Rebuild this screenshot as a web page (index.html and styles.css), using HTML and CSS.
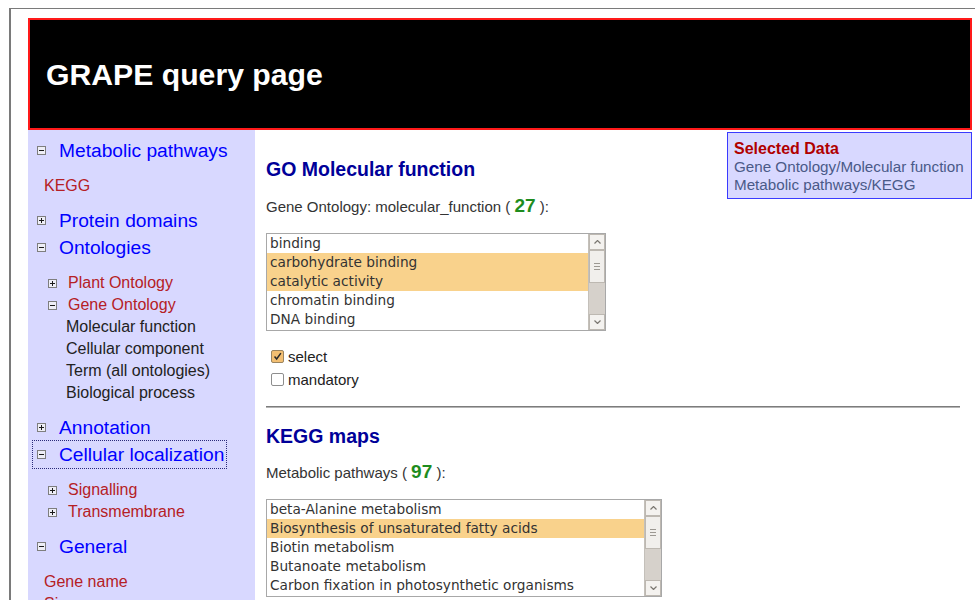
FILE: index.html
```html
<!DOCTYPE html>
<html lang="en">
<head>
<meta charset="utf-8">
<title>GRAPE query page</title>
<link rel="stylesheet" href="styles.css">
</head>
<body>
<div class="frame">
  <div class="page">
    <header class="banner"><h1>GRAPE query page</h1></header>
    <div class="layout">
      <nav class="side">
        <div class="group">
          <a class="head"><svg class="tog" viewBox="0 0 9 9"><rect x="0.5" y="0.5" width="8" height="8"/><path d="M2 4.5h5"/></svg>Metabolic pathways</a>
          <ul class="sub">
            <li class="leaf">KEGG</li>
          </ul>
        </div>
        <div class="group">
          <a class="head"><svg class="tog" viewBox="0 0 9 9"><rect x="0.5" y="0.5" width="8" height="8"/><path d="M2 4.5h5M4.5 2v5"/></svg>Protein domains</a>
        </div>
        <div class="group">
          <a class="head"><svg class="tog" viewBox="0 0 9 9"><rect x="0.5" y="0.5" width="8" height="8"/><path d="M2 4.5h5"/></svg>Ontologies</a>
          <ul class="sub">
            <li class="node"><svg class="tog" viewBox="0 0 9 9"><rect x="0.5" y="0.5" width="8" height="8"/><path d="M2 4.5h5M4.5 2v5"/></svg>Plant Ontology</li>
            <li class="node"><svg class="tog" viewBox="0 0 9 9"><rect x="0.5" y="0.5" width="8" height="8"/><path d="M2 4.5h5"/></svg>Gene Ontology</li>
            <li class="term">Molecular function</li>
            <li class="term">Cellular component</li>
            <li class="term">Term (all ontologies)</li>
            <li class="term">Biological process</li>
          </ul>
        </div>
        <div class="group">
          <a class="head"><svg class="tog" viewBox="0 0 9 9"><rect x="0.5" y="0.5" width="8" height="8"/><path d="M2 4.5h5M4.5 2v5"/></svg>Annotation</a>
        </div>
        <div class="group">
          <a class="head focus"><svg class="tog" viewBox="0 0 9 9"><rect x="0.5" y="0.5" width="8" height="8"/><path d="M2 4.5h5"/></svg>Cellular localization</a>
          <ul class="sub">
            <li class="node"><svg class="tog" viewBox="0 0 9 9"><rect x="0.5" y="0.5" width="8" height="8"/><path d="M2 4.5h5M4.5 2v5"/></svg>Signalling</li>
            <li class="node"><svg class="tog" viewBox="0 0 9 9"><rect x="0.5" y="0.5" width="8" height="8"/><path d="M2 4.5h5M4.5 2v5"/></svg>Transmembrane</li>
          </ul>
        </div>
        <div class="group">
          <a class="head"><svg class="tog" viewBox="0 0 9 9"><rect x="0.5" y="0.5" width="8" height="8"/><path d="M2 4.5h5"/></svg>General</a>
          <ul class="sub">
            <li class="leaf">Gene name</li>
            <li class="leaf">Size</li>
            <li class="leaf">Sequence</li>
          </ul>
        </div>
      </nav>

      <main class="main">
        <aside class="selected">
          <div class="sel-title">Selected Data</div>
          <div class="sel-item">Gene Ontology/Molecular function</div>
          <div class="sel-item">Metabolic pathways/KEGG</div>
        </aside>

        <section class="block">
          <h2>GO Molecular function</h2>
          <p class="count">Gene Ontology: molecular_function ( <b>27</b> ):</p>
          <div class="listbox lb-go">
            <div class="options">
              <div class="opt">binding</div>
              <div class="opt on">carbohydrate binding</div>
              <div class="opt on">catalytic activity</div>
              <div class="opt">chromatin binding</div>
              <div class="opt">DNA binding</div>
            </div>
            <div class="sbar">
              <div class="sbtn"><svg viewBox="0 0 7 4"><path d="M0.5 3.5L3.5 0.5L6.5 3.5"/></svg></div>
              <div class="thumb"><i></i><i></i><i></i></div>
              <div class="track"></div>
              <div class="sbtn"><svg viewBox="0 0 7 4"><path d="M0.5 0.5L3.5 3.5L6.5 0.5"/></svg></div>
            </div>
          </div>
          <div class="checks">
            <label class="chk"><span class="box checked"><svg viewBox="0 0 13 13"><path d="M3 6.5l2.5 3L10.5 2.5"/></svg></span>select</label>
            <label class="chk"><span class="box"></span>mandatory</label>
          </div>
        </section>

        <hr class="rule">

        <section class="block">
          <h2 class="h-kegg">KEGG maps</h2>
          <p class="count">Metabolic pathways ( <b>97</b> ):</p>
          <div class="listbox lb-kegg">
            <div class="options">
              <div class="opt">beta-Alanine metabolism</div>
              <div class="opt on">Biosynthesis of unsaturated fatty acids</div>
              <div class="opt">Biotin metabolism</div>
              <div class="opt">Butanoate metabolism</div>
              <div class="opt">Carbon fixation in photosynthetic organisms</div>
            </div>
            <div class="sbar">
              <div class="sbtn"><svg viewBox="0 0 7 4"><path d="M0.5 3.5L3.5 0.5L6.5 3.5"/></svg></div>
              <div class="thumb"><i></i><i></i><i></i></div>
              <div class="track"></div>
              <div class="sbtn"><svg viewBox="0 0 7 4"><path d="M0.5 0.5L3.5 3.5L6.5 0.5"/></svg></div>
            </div>
          </div>
        </section>
      </main>
    </div>
  </div>
</div>
</body>
</html>
```

FILE: styles.css
```css
html, body {
  margin: 0;
  padding: 0;
  background: #fff;
  overflow: hidden;
}

body {
  font-family: "Liberation Sans", Arial, sans-serif;
  color: #333;
}

/* outer gray frame */
.frame {
  margin: 8px 0 0 9px;
  border-top: 1px solid #7a7a7a;
  border-left: 2px solid #7a7a7a;
  padding: 9px 0 0 17px;
}

.page {
  width: 944px;
}

/* black title banner */
.banner {
  box-sizing: border-box;
  height: 112px;
  background: #000;
  border: 2px solid #ff1a1a;
  display: flex;
  align-items: center;
  padding: 2px 0 0 16px;
}

.banner h1 {
  margin: 0;
  color: #fff;
  font-size: 30.2px;
  font-weight: bold;
  line-height: 34px;
}

.layout {
  display: grid;
  grid-template-columns: 227px 1fr;
  min-height: 560px;
}

/* left navigation tree */
.side {
  background: #d8d8ff;
  padding-top: 7px;
}

.head {
  display: flex;
  align-items: center;
  width: fit-content;
  height: 27px;
  margin-left: 5px;
  padding: 0 2px 0 4px;
  box-sizing: border-box;
  font-size: 19.2px;
  color: #0000ff;
  cursor: pointer;
}

.head .tog {
  margin-right: 13px;
}

.head.focus {
  outline: 1px dotted #2a2a7a;
  outline-offset: 0;
}

.tog {
  width: 9px;
  height: 9px;
  flex: none;
}

.tog rect {
  fill: #eeeef6;
  stroke: #7e7e7e;
  stroke-width: 1;
}

.tog path {
  stroke: #1a1a1a;
  stroke-width: 1;
}

.sub {
  list-style: none;
  margin: 0;
  padding: 11px 0 10px;
}

.sub li {
  font-size: 16px;
  line-height: 22px;
  height: 22px;
}

.leaf {
  padding-left: 16px;
  color: #b52025;
}

.node {
  display: flex;
  align-items: center;
  padding-left: 20px;
  color: #b52025;
}

.node .tog {
  margin-right: 11px;
}

.term {
  padding-left: 38px;
  color: #222;
}

/* main form area */
.main {
  position: relative;
  padding: 0 12px 0 11px;
}

.selected {
  position: absolute;
  top: 2px;
  right: 0;
  width: 245px;
  box-sizing: border-box;
  border: 1px solid #3a3aff;
  background: #d8d8ff;
  padding: 7px 4px 4px 6px;
  line-height: 18px;
  white-space: nowrap;
}

.sel-title {
  font-weight: bold;
  font-size: 16px;
  color: #b00000;
}

.sel-item {
  font-size: 15.2px;
  color: #4a5a88;
}

.block h2 {
  margin: 28px 0 0;
  font-size: 19.5px;
  line-height: 22px;
  font-weight: bold;
  color: #000099;
}

.block h2.h-kegg {
  margin-top: 17px;
}

.count {
  margin: 16px 0 0;
  height: 18px;
  font-size: 15px;
  line-height: 18px;
  color: #333;
}

.h-kegg + .count {
  margin-top: 15px;
}

.count b {
  font-size: 19px;
  line-height: 1;
  color: #1e8c1e;
}

/* list boxes */
.listbox {
  display: flex;
  box-sizing: border-box;
  height: 98px;
  margin-top: 19px;
  border: 1px solid #a8a8a8;
  background: #fff;
  font-family: "DejaVu Sans", sans-serif;
  font-size: 13.7px;
  color: #333;
}

.h-kegg ~ .listbox {
  margin-top: 19px;
}

.lb-go {
  width: 340px;
}

.lb-kegg {
  width: 396px;
}

.options {
  flex: 1;
  overflow: hidden;
}

.opt {
  height: 19px;
  line-height: 19px;
  padding-left: 3px;
  white-space: nowrap;
}

.opt.on {
  background: #f9d28c;
}

.sbar {
  width: 16px;
  display: flex;
  flex-direction: column;
  border-left: 1px solid #c4c0ba;
  background: #d6d1cb;
}

.sbtn {
  height: 16px;
  box-sizing: border-box;
  background: #f4f2ef;
  border: 1px solid #bdb8b1;
  display: flex;
  align-items: center;
  justify-content: center;
}

.sbtn svg {
  width: 7px;
  height: 4px;
}

.sbtn path {
  fill: none;
  stroke: #7a7670;
  stroke-width: 1.2;
}

.thumb {
  height: 33px;
  box-sizing: border-box;
  background: #f1efec;
  border: 1px solid #bdb8b1;
  display: flex;
  flex-direction: column;
  align-items: center;
  justify-content: center;
  gap: 2px;
}

.thumb i {
  display: block;
  width: 6px;
  height: 1px;
  background: #9c9892;
}

.track {
  flex: 1;
}

/* checkboxes */
.checks {
  margin-top: 14px;
}

.chk {
  display: flex;
  align-items: center;
  height: 23px;
  padding-left: 5px;
  font-size: 15px;
  color: #222;
}

.box {
  width: 13px;
  height: 13px;
  box-sizing: border-box;
  border: 1px solid #8e8e8e;
  border-radius: 2px;
  background: #fff;
  margin-right: 4px;
  display: inline-flex;
}

.box.checked {
  background: #f3bf72;
  border-color: #9a8460;
}

.box svg {
  width: 11px;
  height: 11px;
}

.box path {
  fill: none;
  stroke: #2a2a2a;
  stroke-width: 1.8;
}

.rule {
  margin: 15px 0 0;
  height: 0;
  border: 0;
  border-top: 1px solid #7c7c7c;
  border-bottom: 1px solid #b4b4b4;
}
```
